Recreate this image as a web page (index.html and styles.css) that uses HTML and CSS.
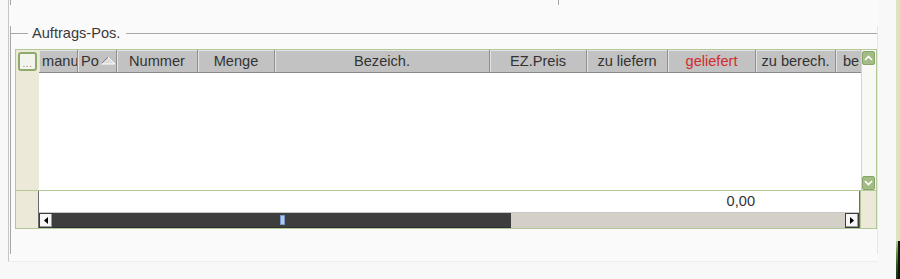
FILE: index.html
```html
<!DOCTYPE html>
<html lang="de">
<head>
<meta charset="utf-8">
<title>Auftrags-Pos.</title>
<link rel="stylesheet" href="styles.css">
</head>
<body>
<div class="screen">
  <div class="panel">
    <div class="topbox"></div>
    <div class="group">
      <div class="group-title"><span class="legend">Auftrags-Pos.</span></div>
      <div class="grid">
        <div class="grid-top">
          <div class="rowhead-col">
            <div class="sel-btn">...</div>
          </div>
          <div class="table">
            <div class="hdr">
              <div class="hc w-manu left">manu</div>
              <div class="hc w-pos left">Po<svg class="sort" width="16" height="9" viewBox="0 0 16 9"><polygon points="1,8 8,1 15,8" fill="#dcdcdc"/><path d="M1 8 L8 1" stroke="#7a7a7a" stroke-width="1" fill="none"/><path d="M8 1 L15 8 L1 8" stroke="#ffffff" stroke-width="1" fill="none"/></svg></div>
              <div class="hc w-num">Nummer</div>
              <div class="hc w-menge">Menge</div>
              <div class="hc w-bez">Bezeich.</div>
              <div class="hc w-ez">EZ.Preis</div>
              <div class="hc w-zul">zu liefern</div>
              <div class="hc w-gel red">geliefert</div>
              <div class="hc w-zub">zu berech.</div>
              <div class="hc w-ber left">be</div>
            </div>
            <div class="rows"></div>
          </div>
          <div class="vscroll">
            <div class="vbtn"><svg width="9" height="6" viewBox="0 0 9 6"><polyline points="1,5 4.5,1.5 8,5" fill="none" stroke="#ffffff" stroke-width="1.7"/></svg></div>
            <div class="vtrack"></div>
            <div class="vbtn"><svg width="9" height="6" viewBox="0 0 9 6"><polyline points="1,1 4.5,4.5 8,1" fill="none" stroke="#ffffff" stroke-width="1.7"/></svg></div>
          </div>
        </div>
        <div class="grid-foot">
          <div class="rowhead-foot"></div>
          <div class="foot-main">
            <div class="sumrow">
              <div class="sc w-manu"></div>
              <div class="sc w-pos"></div>
              <div class="sc w-num"></div>
              <div class="sc w-menge"></div>
              <div class="sc w-bez"></div>
              <div class="sc w-ez"></div>
              <div class="sc w-zul"></div>
              <div class="sc w-gel num">0,00</div>
              <div class="sc w-zub"></div>
            </div>
            <div class="hscroll">
              <div class="hbtn"><svg width="4" height="7" viewBox="0 0 4 7"><polygon points="4,0 0,3.5 4,7" fill="#000"/></svg></div>
              <div class="thumb"><span class="grip"></span></div>
              <div class="htrack"></div>
              <div class="hbtn"><svg width="4" height="7" viewBox="0 0 4 7"><polygon points="0,0 4,3.5 0,7" fill="#000"/></svg></div>
            </div>
          </div>
          <div class="corner"></div>
        </div>
      </div>
    </div>
  </div>
  <div class="gap"></div>
  <div class="edge">
    <div class="edge-top"></div>
    <div class="edge-bot"></div>
  </div>
</div>
</body>
</html>
```
FILE: styles.css
```css
* { box-sizing: border-box; }

html, body {
  margin: 0;
  padding: 0;
  background: #f8f8f8;
}

body {
  font-family: "Liberation Sans", Arial, sans-serif;
  font-size: 14.6px;
  color: #333333;
}

.screen {
  display: flex;
  width: 900px;
  height: 279px;
  overflow: hidden;
}

.panel {
  margin-left: 8px;
  width: 870px;
  height: 262px;
  border-left: 1px solid #c6c6c6;
  border-bottom: 1px solid #ededed;
  background: #fafafa;
  flex: none;
}

.topbox {
  margin-left: 1px;
  width: 549px;
  height: 5px;
  border-left: 1px solid #a6a6a6;
  border-right: 1px solid #a6a6a6;
}

.group {
  margin-top: 28px;
  margin-left: 1px;
  width: 868px;
  height: 228px;
  border-left: 1px solid #a6a6a6;
  border-right: 1px solid #e6e6e6;
}

.group-title {
  display: flex;
  align-items: center;
  height: 15px;
  margin-top: -7px;
}

.group-title::before {
  content: "";
  width: 17px;
  height: 0;
  border-top: 1px solid #a6a6a6;
  flex: none;
}

.group-title::after {
  content: "";
  flex: 1;
  height: 0;
  border-top: 1px solid #a6a6a6;
}

.legend {
  padding: 0 6px 0 4px;
  line-height: 15px;
  color: #3a3a3a;
  white-space: nowrap;
}

.grid {
  margin-top: 8px;
  margin-left: 4px;
  width: 862px;
  height: 180px;
  border: 1px solid #b3c897;
  background: #ffffff;
}

.grid-top {
  display: flex;
  height: 141px;
  border-bottom: 1px solid #b3c897;
}

.rowhead-col {
  width: 23px;
  flex: none;
  background: #ece9d8;
  padding: 2px 0 0 2px;
}

.sel-btn {
  width: 19px;
  height: 19px;
  border: 2px solid #8fab6c;
  border-radius: 3px;
  background: #f4f4ee;
  color: #8a8a8a;
  font-size: 10px;
  line-height: 19px;
  text-align: center;
  letter-spacing: 0.5px;
}

.table {
  width: 822px;
  flex: none;
  display: flex;
  flex-direction: column;
}

.hdr {
  display: flex;
  height: 23px;
  background: #c2c2c2;
  border-bottom: 1px solid #8a8a8a;
  overflow: hidden;
  flex: none;
}

.hc {
  flex: none;
  height: 22px;
  line-height: 22px;
  text-align: center;
  white-space: nowrap;
  overflow: hidden;
  border-right: 1px solid #8e8e8e;
  box-shadow: inset 1px 1px 0 #e4e4e4;
}

.hc.left {
  text-align: left;
  padding-left: 3px;
}

.hc.w-ber {
  padding-left: 7px;
  border-right: none;
}

.red { color: #d02c2c; }

.sort {
  vertical-align: top;
  margin-top: 6px;
  margin-left: 1px;
}

.w-manu { width: 39px; }
.w-pos { width: 39px; }
.w-num { width: 81px; }
.w-menge { width: 77px; }
.w-bez { width: 215px; }
.w-ez { width: 97px; }
.w-zul { width: 81px; }
.w-gel { width: 88px; }
.w-zub { width: 80px; }
.w-ber { width: 24px; }

.rows {
  flex: 1;
  background: #ffffff;
}

.vscroll {
  width: 15px;
  flex: none;
  display: flex;
  flex-direction: column;
  background: #f8f8f4;
  border-left: 1px solid #d4d8c4;
}

.vbtn {
  width: 13px;
  height: 14px;
  flex: none;
  margin-top: 1px;
  border: 1px solid #89a46a;
  border-radius: 2px;
  background: #a3bc86;
  display: flex;
  align-items: center;
  justify-content: center;
}

.vtrack { flex: 1; }

.grid-foot {
  display: flex;
  height: 37px;
}

.rowhead-foot {
  width: 22px;
  flex: none;
  background: #ece9d8;
}

.foot-main {
  width: 822px;
  flex: none;
  border-left: 1px solid #6c6c6c;
  border-right: 1px solid #6c6c6c;
  display: flex;
  flex-direction: column;
}

.sumrow {
  height: 21px;
  display: flex;
  overflow: hidden;
  background: #ffffff;
}

.sc {
  flex: none;
  height: 21px;
  line-height: 21px;
  white-space: nowrap;
}

.sc.num {
  text-align: right;
  padding-right: 1px;
}

.hscroll {
  height: 16px;
  border-top: 1px solid #c8c8c8;
  display: flex;
}

.hbtn {
  width: 14px;
  height: 15px;
  flex: none;
  background: #f6f6f6;
  border: 1px solid #3c3c3c;
  box-shadow: inset -1px -1px 0 #9a9a9a;
  display: flex;
  align-items: center;
  justify-content: center;
}

.thumb {
  width: 458px;
  flex: none;
  background: #3e3e3e;
  border-bottom: 1px solid #2e2e2e;
  display: flex;
  align-items: center;
  justify-content: center;
}

.grip {
  width: 5px;
  height: 10px;
  background: #b2c8ee;
  border: 1px solid #7894c8;
}

.htrack {
  flex: 1;
  background: #d4d0c8;
}

.corner {
  width: 16px;
  flex: none;
  background: #ece9d8;
  border-left: 1px solid #b3c897;
}

.gap {
  width: 18px;
  flex: none;
}

.edge {
  width: 4px;
  flex: none;
  display: flex;
  flex-direction: column;
}

.edge-top {
  flex: 1;
  background: #dfe3bd;
}

.edge-bot {
  height: 38px;
  background: linear-gradient(to bottom, #b4cf96 0, #6f9a4c 10px, #2f5a1e 24px, #163010 38px);
  border-right: 2px solid #0e0e0e;
}
```
